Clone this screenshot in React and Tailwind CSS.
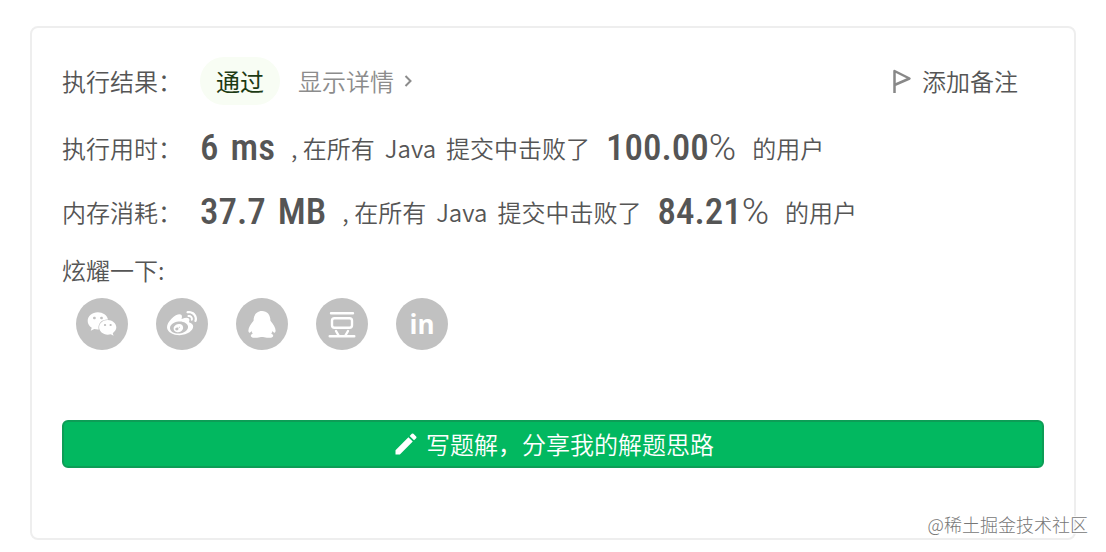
import React from "react";
import { FaWeixin, FaWeibo } from "react-icons/fa";
import { MdEdit } from "react-icons/md";

function DoubanIcon() {
  return (
    <svg viewBox="0 0 28 27" className="h-[27px] w-7" fill="none" stroke="#fff" strokeWidth="2.4" strokeLinecap="round" aria-hidden="true">
      <path d="M3 2.200h22M1.700 25.200h24.600M8 20l2.600 4.500M20 20l-2.600 4.500" />
      <rect x="4" y="7.200" width="20" height="9.600" rx="2.500" />
    </svg>
  );
}

function QqIcon() {
  return (
    <svg viewBox="0 0 82 80" className="h-[27px] w-7" fill="currentColor" aria-hidden="true">
      <path d="M41 0C56 0 66 11 66 29C75 39 83 52 81 61C80 66 76 65 72 59C71 63 70 65 68 67C73 69 76 73 73 76C69 81 52 80 44 77H38C30 80 13 81 9 76C6 73 9 69 14 67C12 65 11 63 10 59C6 65 2 66 1 61C-1 52 7 39 16 29C16 11 26 0 41 0Z" />
    </svg>
  );
}

const shares = [
  { label: "微信", icon: <FaWeixin className="size-[30px]" /> },
  { label: "微博", icon: <FaWeibo className="size-[30px]" /> },
  { label: "QQ", icon: <QqIcon /> },
  { label: "豆瓣", icon: <DoubanIcon /> },
  { label: "LinkedIn", icon: <span className="font-['Open_Sans',sans-serif] text-[26px] leading-none font-bold">in</span> },
];

function Stat({ label, value, unit, percent }) {
  return (
    <div className="flex h-16 items-center whitespace-pre">
      <span className="w-[138px]">{label}</span>
      <strong className="mr-4 flex gap-3 font-['Roboto_Condensed',Roboto,sans-serif] text-[37px] font-medium">
        <span>{value}</span>
        <span>{unit}</span>
      </strong>
      <span>, 在所有</span>
      <span className="mx-2.5">Java</span>
      <span>提交中击败了</span>
      <span className="mx-4 font-['Roboto_Condensed',Roboto,sans-serif] text-[37px]">
        <strong className="font-medium">{percent}</strong>
        <span className="font-[Roboto] font-light">%</span>
      </span>
      <span>的用户</span>
    </div>
  );
}

export default function App() {
  return (
    <main className="relative bg-white px-[30px] pt-[26px] pb-3 font-['Noto_Sans_CJK_SC',sans-serif] text-2xl font-[350] text-[#555]">
      <section className="rounded-lg border-2 border-[#eee] px-[30px] pt-7 pb-[70px]">
        <header className="flex h-[50px] items-center">
          <span className="w-[138px]">执行结果：</span>
          <span className="flex h-12 items-center rounded-full bg-[#f8fdf4] px-4 font-normal text-[#1c3a13]">通过</span>
          <a href="#detail" className="ml-[18px] flex items-center gap-2.5 text-[#8c8c8c]">
            显示详情
            <svg viewBox="0 0 9 14" className="h-[14px] w-[9px]" fill="none" stroke="currentColor" strokeWidth="2" aria-hidden="true">
              <path d="M1.500 2 6.500 7l-5 5" />
            </svg>
          </a>
          <button type="button" className="mr-[26px] ml-auto flex items-center gap-2.5">
            <svg viewBox="0 0 20 26" className="h-[26px] w-5" fill="none" stroke="#888" strokeWidth="2.5" strokeLinejoin="round" aria-hidden="true">
              <path d="M2.500 25V3l15 7.500-15 6.500" />
            </svg>
            添加备注
          </button>
        </header>
        <div className="mt-2.5">
          <Stat label="执行用时：" value="6" unit="ms" percent="100.00" />
          <Stat label="内存消耗：" value="37.7" unit="MB" percent="84.21" />
        </div>
        <p className="mt-1.5 leading-[40px]">炫耀一下:</p>
        <div className="mt-2 flex gap-7 pl-3.5">
          {shares.map((s) => (
            <button key={s.label} type="button" aria-label={s.label} className="flex size-[52px] items-center justify-center rounded-full bg-[#c1c1c1] text-white">
              {s.icon}
            </button>
          ))}
        </div>
        <button type="button" className="mt-[70px] flex h-12 w-full items-center justify-center gap-1.5 rounded-md border-2 border-[#0d9d56] bg-[#02b860] text-white">
          <MdEdit className="size-7" />
          写题解，分享我的解题思路
        </button>
      </section>
      <span className="absolute right-[18px] bottom-3.5 text-lg leading-7 font-light text-[#777] [text-shadow:1px_1px_0_#fff,-1px_-1px_0_#fff]">@稀土掘金技术社区</span>
    </main>
  );
}
